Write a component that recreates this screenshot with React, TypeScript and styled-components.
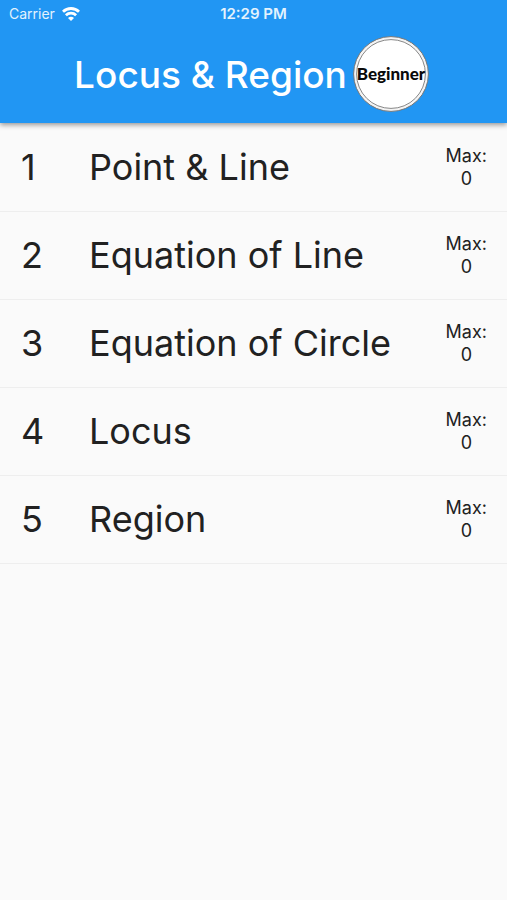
import React from "react";
import styled, { createGlobalStyle } from "styled-components";

const GlobalStyle = createGlobalStyle`
  * { box-sizing: border-box; }
  body { margin: 0; background: #fafafa; color: #212121; font-family: Inter, "Liberation Sans", sans-serif; }
`;

const Header = styled.header`
  background: #2196f3;
  color: #fff;
  box-shadow: 0 2px 5px rgba(0, 0, 0, 0.4);
`;

const StatusBar = styled.div`
  display: grid;
  grid-template-columns: 1fr auto 1fr;
  align-items: center;
  height: 27px;
  padding: 0 9px;
  font-size: 14px;
`;

const Carrier = styled.span`
  display: flex;
  align-items: center;
  gap: 7px;
  color: #e3f2fd;
`;

const Clock = styled.time`
  font-size: 15px;
  font-weight: 600;
  color: #e3f2fd;
`;

const TitleBar = styled.div`
  display: flex;
  align-items: center;
  justify-content: center;
  gap: 6px;
  height: 96px;
  padding: 0 4px 2px 0;
`;

const Title = styled.h1`
  margin: 0;
  font-size: 37px;
  font-weight: 500;
  white-space: nowrap;
`;

const Badge = styled.svg`
  width: 76px;
  height: 76px;
  flex: none;
`;

const BadgeLabel = styled.text`
  font-family: Lato, sans-serif;
  font-size: 17px;
  font-weight: 900;
  fill: #0a0a0a;
`;

const List = styled.ol`
  list-style: none;
  margin: 0;
  padding: 1px 0 0;
`;

const Row = styled.li`
  border-bottom: 1px solid #eeeeee;
`;

const RowButton = styled.button`
  display: grid;
  grid-template-columns: 68px 1fr auto;
  align-items: center;
  width: 100%;
  height: 87px;
  padding: 0 20px 1px 21px;
  border: 0;
  background: none;
  color: inherit;
  font: inherit;
  font-size: 36px;
  text-align: left;
  cursor: pointer;
`;

const Score = styled.span`
  font-size: 18px;
  line-height: 23px;
  text-align: center;
`;

const Line = styled.span`
  display: block;
`;

const topics = ["Point & Line", "Equation of Line", "Equation of Circle", "Locus", "Region"];

export default function App() {
  return (
    <>
      <GlobalStyle />
      <Header>
        <StatusBar>
          <Carrier>
            Carrier
            <svg width="18" height="14" viewBox="0 0 18 14" fill="none" stroke="#fff" strokeWidth="2.8" role="img" aria-label="Wi-Fi">
              <path d="M1 4.8C5.5 0.4 12.5 0.4 17 4.8" />
              <path d="M3.9 8.2C6.8 5.4 11.2 5.4 14.1 8.2" />
              <path d="M9 14L6 10.9C7.7 9.2 10.3 9.2 12 10.9Z" fill="#fff" stroke="none" />
            </svg>
          </Carrier>
          <Clock>12:29 PM</Clock>
        </StatusBar>
        <TitleBar>
          <Title>Locus &amp; Region</Title>
          <Badge viewBox="0 0 76 76" role="img" aria-label="Beginner">
            <circle cx="38" cy="38" r="37.4" fill="#f4f4f4" stroke="#777" />
            <circle cx="38" cy="38" r="34.4" fill="#fff" stroke="#888" />
            <BadgeLabel x="38" y="44" textAnchor="middle">Beginner</BadgeLabel>
          </Badge>
        </TitleBar>
      </Header>
      <main>
        <List>
          {topics.map((topic, i) => (
            <Row key={topic}>
              <RowButton type="button">
                <span>{i + 1}</span>
                <span>{topic}</span>
                <Score>
                  <Line>Max:</Line>
                  <Line>0</Line>
                </Score>
              </RowButton>
            </Row>
          ))}
        </List>
      </main>
    </>
  );
}
